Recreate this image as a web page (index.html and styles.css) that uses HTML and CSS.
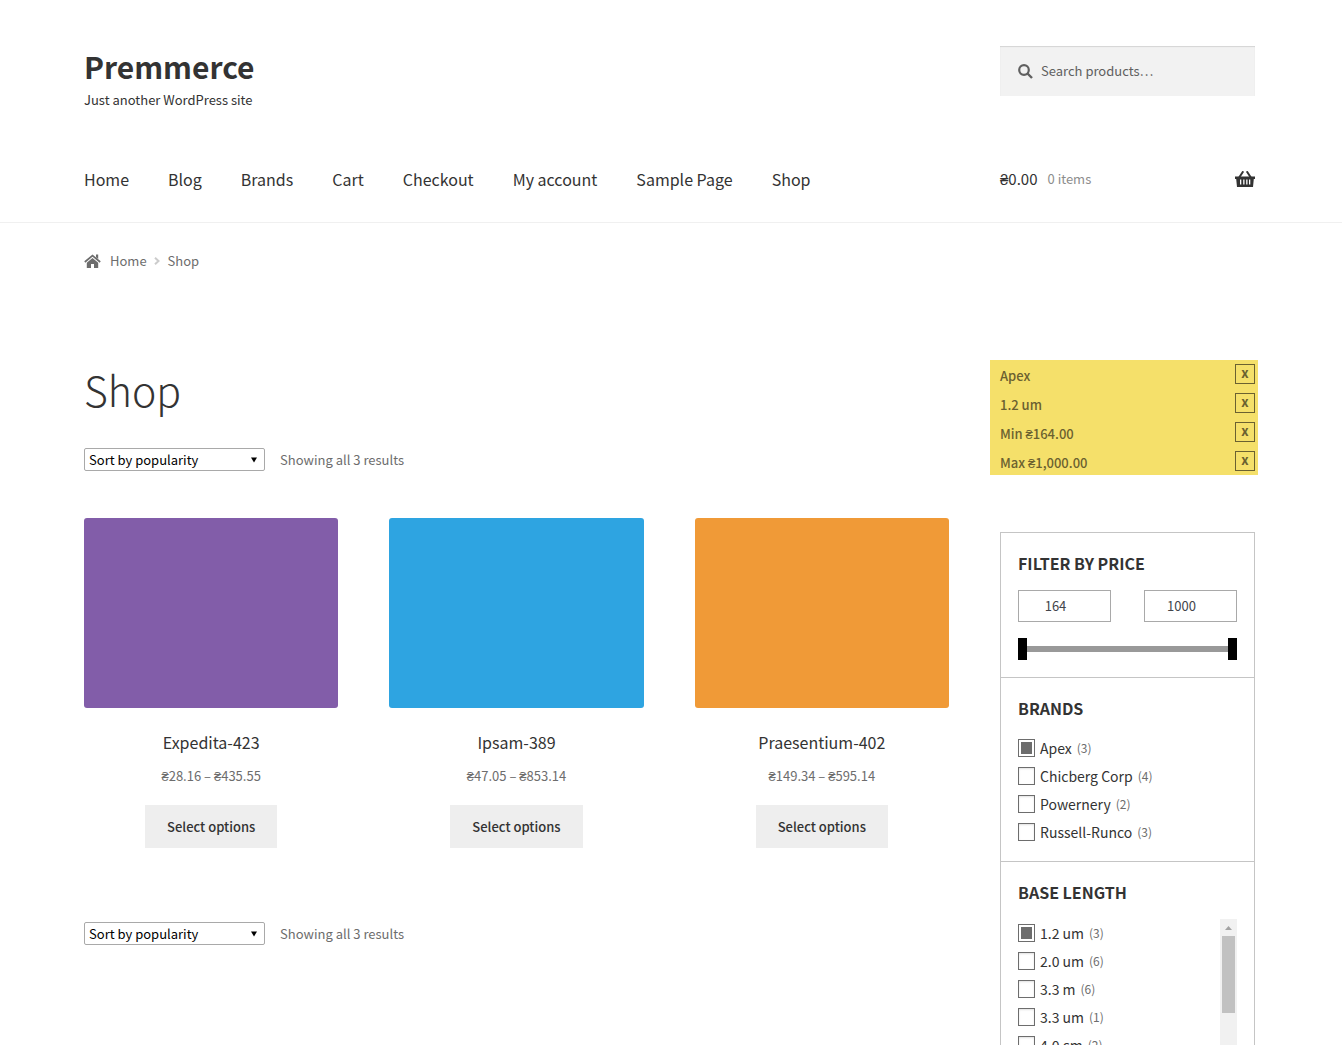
FILE: index.html
```html
<!DOCTYPE html>
<html lang="en">
<head>
<meta charset="utf-8">
<title>Shop – Premmerce</title>
<link rel="stylesheet" href="styles.css">
</head>
<body>
<header class="site-header">
  <div class="header-row branding-row">
    <div class="branding">
      <a class="site-title" href="#">Premmerce</a>
      <p class="tagline">Just another WordPress site</p>
    </div>
    <form class="search" role="search">
      <svg class="search-icon" viewBox="0 0 15 15" aria-hidden="true"><circle cx="6" cy="6" r="4.8" fill="none" stroke="currentColor" stroke-width="2.2"/><path d="M9.5 9.5 14 14" stroke="currentColor" stroke-width="2.4"/></svg>
      <input class="search-input" type="search" placeholder="Search products…" aria-label="Search products">
    </form>
  </div>
  <div class="header-row nav-row">
    <nav class="main-nav" aria-label="Primary">
      <a href="#">Home</a><a href="#">Blog</a><a href="#">Brands</a><a href="#">Cart</a><a href="#">Checkout</a><a href="#">My account</a><a href="#">Sample Page</a><a href="#">Shop</a>
    </nav>
    <a class="cart" href="#">
      <span class="cart-total">₴0.00</span>
      <span class="cart-count">0 items</span>
      <svg class="cart-icon" viewBox="0 0 20 16" aria-hidden="true"><path d="M7.800 1 4.500 6M12.200 1l3.300 5" stroke="currentColor" stroke-width="2" fill="none" stroke-linecap="round"/><path fill="currentColor" fill-rule="evenodd" d="M0 5.500h20v2.500h-1.200L18 16H2L1.200 8H0zM5 8.500v5h1.300v-5zM8.200 8.500v5h1.300v-5zM11.200 8.500v5h1.300v-5zM14 8.500v5h1.300v-5z"/></svg>
    </a>
  </div>
</header>

<nav class="breadcrumb" aria-label="Breadcrumb">
  <svg class="home-icon" viewBox="0 0 17 14" aria-hidden="true"><path d="M.8 8 8.500 1.500 16.200 8" fill="none" stroke="currentColor" stroke-width="1.700"/><path fill="currentColor" d="M12 .5h2.200v4.500L12 3.200zM8.500 4l5.700 4.800V14H10v-4H7v4H2.800V8.800z"/></svg>
  <a href="#">Home</a>
  <svg class="crumb-sep" viewBox="0 0 6 8" aria-hidden="true"><path d="M1 .8 4.500 4 1 7.200" fill="none" stroke="currentColor" stroke-width="2"/></svg>
  <span>Shop</span>
</nav>

<div class="content">
  <main class="shop">
    <h1 class="page-title">Shop</h1>
    <div class="sorting">
      <span class="select-wrap">
        <select aria-label="Shop order"><option>Sort by popularity</option></select>
        <svg class="select-arrow" viewBox="0 0 6 6" aria-hidden="true"><path d="M0 .5h6L3 5.500z"/></svg>
      </span>
      <span class="result-count">Showing all 3 results</span>
    </div>
    <ul class="products">
      <li class="product">
        <div class="thumb purple"></div>
        <h2>Expedita-423</h2>
        <span class="price">₴28.16 – ₴435.55</span>
        <button type="button">Select options</button>
      </li>
      <li class="product">
        <div class="thumb blue"></div>
        <h2>Ipsam-389</h2>
        <span class="price">₴47.05 – ₴853.14</span>
        <button type="button">Select options</button>
      </li>
      <li class="product">
        <div class="thumb orange"></div>
        <h2>Praesentium-402</h2>
        <span class="price">₴149.34 – ₴595.14</span>
        <button type="button">Select options</button>
      </li>
    </ul>
    <div class="sorting">
      <span class="select-wrap">
        <select aria-label="Shop order"><option>Sort by popularity</option></select>
        <svg class="select-arrow" viewBox="0 0 6 6" aria-hidden="true"><path d="M0 .5h6L3 5.500z"/></svg>
      </span>
      <span class="result-count">Showing all 3 results</span>
    </div>
  </main>

  <aside class="sidebar">
    <ul class="active-filters">
      <li><span>Apex</span><button type="button" aria-label="Remove Apex">x</button></li>
      <li><span>1.2 um</span><button type="button" aria-label="Remove 1.2 um">x</button></li>
      <li><span>Min ₴164.00</span><button type="button" aria-label="Remove minimum price">x</button></li>
      <li><span>Max ₴1,000.00</span><button type="button" aria-label="Remove maximum price">x</button></li>
    </ul>
    <form class="filters">
      <section class="filter">
        <h2>FILTER BY PRICE</h2>
        <div class="price-inputs">
          <input type="text" value="164" aria-label="Minimum price">
          <input type="text" value="1000" aria-label="Maximum price">
        </div>
        <div class="slider">
          <input type="range" min="164" max="1000" value="164" aria-label="Minimum price slider">
          <input type="range" min="164" max="1000" value="1000" aria-label="Maximum price slider">
        </div>
      </section>
      <section class="filter">
        <h2>BRANDS</h2>
        <div class="options">
          <label><input type="checkbox" checked><span>Apex</span><small>(3)</small></label>
          <label><input type="checkbox"><span>Chicberg Corp</span><small>(4)</small></label>
          <label><input type="checkbox"><span>Powernery</span><small>(2)</small></label>
          <label><input type="checkbox"><span>Russell-Runco</span><small>(3)</small></label>
        </div>
      </section>
      <section class="filter">
        <h2>BASE LENGTH</h2>
        <div class="scroll-area">
          <div class="options">
            <label><input type="checkbox" checked><span>1.2 um</span><small>(3)</small></label>
            <label><input type="checkbox"><span>2.0 um</span><small>(6)</small></label>
            <label><input type="checkbox"><span>3.3 m</span><small>(6)</small></label>
            <label><input type="checkbox"><span>3.3 um</span><small>(1)</small></label>
            <label><input type="checkbox"><span>4.0 cm</span><small>(2)</small></label>
          </div>
          <div class="scrollbar" aria-hidden="true">
            <svg class="scroll-up" viewBox="0 0 7 4"><path d="M0 4 3.500 0 7 4z"/></svg>
            <div class="scroll-thumb"></div>
          </div>
        </div>
      </section>
    </form>
  </aside>
</div>
</body>
</html>
```
FILE: styles.css
```css
* { box-sizing: border-box; }

body {
  margin: 0;
  height: 100vh;
  overflow: hidden;
  background: #fff;
  color: #333;
  font: 14px/20px "Noto Sans CJK SC", "Source Sans Pro", sans-serif;
}

a { color: inherit; text-decoration: none; }
h1, h2, p, ul { margin: 0; padding: 0; }
ul { list-style: none; }
svg { display: block; flex: none; }
button, input, select { font: inherit; color: inherit; }

.site-header {
  padding: 46px 87px 0 84px;
  border-bottom: 1px solid #f0f0f0;
}

.header-row, .content {
  display: grid;
  grid-template-columns: minmax(0, 1fr) 255px;
  column-gap: 51px;
}

.branding-row { align-items: start; }
.site-title {
  display: block;
  padding-bottom: 4px;
  font-size: 30px;
  line-height: 40px;
  font-weight: 700;
}
.tagline { font-size: 13px; }

.search {
  display: flex;
  align-items: center;
  gap: 8px;
  height: 50px;
  padding: 0 18px;
  background: #f2f2f2;
  color: #606060;
  box-shadow: inset 0 1px 1px rgba(0, 0, 0, .125);
}
.search-icon { width: 15px; height: 15px; }
.search-input {
  flex: 1;
  min-width: 0;
  padding: 0;
  border: 0;
  outline: 0;
  background: none;
  font-size: 13px;
}
.search-input::placeholder { color: #606060; opacity: 1; }

.nav-row { align-items: center; padding: 49px 0 23px; }
.main-nav { display: flex; gap: 39px; font-size: 16px; line-height: 40px; }
.cart { display: flex; align-items: center; gap: 10px; font-size: 15px; line-height: 40px; }
.cart-count { color: #8d8d8d; font-size: 13px; }
.cart-icon { width: 20px; height: 16px; margin-left: auto; }

.breadcrumb {
  display: flex;
  align-items: center;
  padding: 28px 87px 0 84px;
  color: #6d6d6d;
  font-size: 13px;
}
.home-icon { width: 17px; height: 14px; margin-right: 9px; }
.crumb-sep { width: 6px; height: 8px; margin: 0 8px 0 7px; color: #ccc; }

.content { padding: 89px 87px 0 84px; }

.page-title {
  font-size: 41px;
  line-height: 58px;
  font-weight: 300;
}
.sorting { display: flex; align-items: center; gap: 15px; }
.page-title + .sorting { margin-top: 30px; }
.select-wrap { display: grid; width: 181px; }
.select-wrap select {
  grid-area: 1 / 1;
  appearance: none;
  height: 23px;
  padding: 0 4px;
  border: 1px solid #a9a9a9;
  border-radius: 2px;
  background: #fff;
  color: #000;
  font-size: 13px;
  line-height: 20px;
}
.select-arrow {
  grid-area: 1 / 1;
  place-self: center end;
  width: 6px;
  height: 6px;
  margin-right: 8px;
  pointer-events: none;
}
.result-count { color: #6d6d6d; font-size: 13px; }

.products {
  display: grid;
  grid-template-columns: repeat(3, minmax(0, 1fr));
  gap: 51px;
  margin: 47px 0 74px;
}
.product { display: flex; flex-direction: column; align-items: center; }
.thumb { align-self: stretch; height: 190px; border-radius: 3px; }
.purple { background: #825da9; }
.blue { background: #2ea4e1; }
.orange { background: #f09a37; }
.product h2 { margin-top: 22px; font-size: 16px; line-height: 24px; font-weight: 400; }
.price { margin-top: 12px; color: #6d6d6d; font-size: 13px; }
.product button {
  height: 43px;
  margin-top: 19px;
  padding: 0 22px;
  border: 0;
  background: #eee;
  font-size: 13px;
  font-weight: 500;
}

.active-filters {
  display: grid;
  gap: 9px;
  margin: 0 -3px 57px -10px;
  padding: 4px 3px 4px 10px;
  background: #f5e06a;
  color: #6b6130;
  font-size: 13px;
  font-weight: 500;
}
.active-filters li { display: flex; justify-content: space-between; line-height: 24px; height: 20px; }
.active-filters button {
  width: 20px;
  height: 20px;
  padding: 0 0 2px;
  border: 1px solid #6b6130;
  background: none;
  font-weight: 700;
  line-height: 16px;
}

.filters { border: 1px solid #c5c5c5; }
.filter { padding: 18px 17px 17px; }
.filter + .filter { border-top: 1px solid #c5c5c5; }
.filter h2 { font-size: 16px; line-height: 24px; font-weight: 700; }

.price-inputs { display: flex; justify-content: space-between; margin-top: 15px; }
.price-inputs input {
  width: 93px;
  height: 32px;
  padding: 0 18px 2px 0;
  border: 1px solid #a9a9a9;
  color: #43454b;
  font-size: 13px;
  text-align: center;
}
.slider {
  display: grid;
  margin-top: 16px;
  background: linear-gradient(#999, #999) center / 100% 6px no-repeat;
}
.slider input {
  grid-area: 1 / 1;
  appearance: none;
  width: 100%;
  height: 22px;
  margin: 0;
  background: none;
  pointer-events: none;
}
.slider input::-webkit-slider-thumb {
  appearance: none;
  width: 9px;
  height: 22px;
  background: #000;
  pointer-events: auto;
}

.options { display: flex; flex-direction: column; flex: 1; gap: 8px; }
.filter > .options { margin-top: 18px; padding-bottom: 2px; }
.options label { display: flex; align-items: center; height: 20px; }
.options input {
  appearance: none;
  width: 17px;
  height: 18px;
  margin: 0 5px 0 0;
  padding: 2px;
  border: 1px solid #6d6d6d;
  background: #fff;
  box-shadow: inset 0 1px 2px rgba(0, 0, 0, .12);
}
.options input:checked { background: #6d6d6d content-box; box-shadow: none; }
.options small { margin-left: 5px; color: #6d6d6d; font-size: 12px; }

.scroll-area { display: flex; height: 180px; margin-top: 15px; overflow: hidden; }
.scroll-area .options { padding-top: 4px; }
.scrollbar { width: 17px; padding: 7px 2px 0; background: #f1f1f1; }
.scroll-up { width: 7px; height: 4px; margin: 0 auto 6px; fill: #a3a3a3; }
.scroll-thumb { height: 77px; background: #c1c1c1; }
```
